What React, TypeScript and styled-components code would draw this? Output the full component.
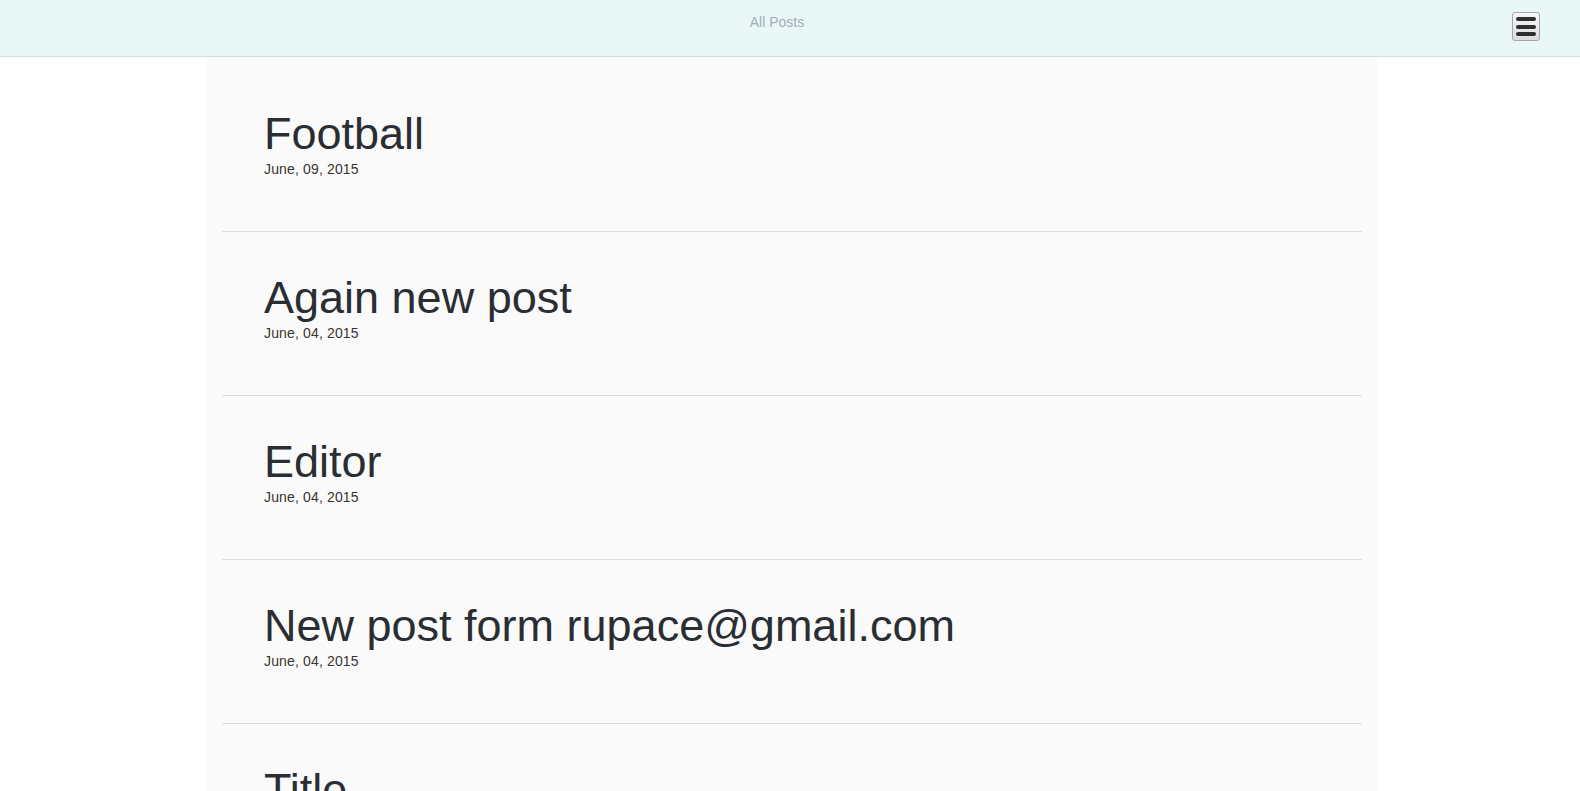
import React from "react";
import styled, { createGlobalStyle } from "styled-components";

const GlobalStyle = createGlobalStyle`
  html, body {
    margin: 0;
    padding: 0;
    background: #ffffff;
    font-family: "Liberation Sans", Arial, Helvetica, sans-serif;
  }
  * { box-sizing: border-box; }
`;

const Page = styled.div`
  display: flex;
  flex-direction: column;
  min-height: 100vh;
`;

const Header = styled.header`
  height: 57px;
  background: #e9f7f7;
  border-bottom: 1px solid #d3dcdc;
  display: flex;
  align-items: flex-start;
  padding: 0 40px 0 42px;
`;

const HeaderTitle = styled.a`
  flex: 1;
  text-align: center;
  font-size: 14px;
  line-height: 20px;
  padding-top: 12px;
  color: #a3adb8;
  text-decoration: none;
`;

const MenuButton = styled.button`
  margin-top: 12px;
  width: 28px;
  height: 29px;
  padding: 0;
  border: 1px solid #a6a6a6;
  border-radius: 3px;
  background: linear-gradient(#f7f7f7, #dcdcdc);
  display: flex;
  flex-direction: column;
  align-items: center;
  justify-content: center;
  gap: 3.5px;
  cursor: pointer;
`;

const Bar = styled.span`
  display: block;
  width: 20px;
  height: 4px;
  border-radius: 2px;
  background: #2f2f2f;
`;

const Container = styled.main`
  flex: 1;
  width: 1170px;
  margin-left: calc(50% - 583px);
  background: #fafafa;
  padding: 11px 15px 0;
`;

const Post = styled.article`
  padding: 41px 0 52px 42px;
  border-bottom: 1px solid #dcdcdc;
`;

const PostTitle = styled.h2`
  margin: 0;
  font-size: 45px;
  line-height: 50px;
  font-weight: 400;
  color: #2a2e33;
`;

const PostDate = styled.div`
  font-size: 14px;
  line-height: 20px;
  letter-spacing: 0.15px;
  color: #3a3530;
`;

const posts = [
  { title: "Football", date: "June, 09, 2015" },
  { title: "Again new post", date: "June, 04, 2015" },
  { title: "Editor", date: "June, 04, 2015" },
  { title: "New post form rupace@gmail.com", date: "June, 04, 2015" },
  { title: "Title", date: "June, 04, 2015" },
];

export default function App() {
  return (
    <>
      <GlobalStyle />
      <Page>
        <Header>
          <HeaderTitle href="#">All Posts</HeaderTitle>
          <MenuButton aria-label="Menu">
            <Bar />
            <Bar />
            <Bar />
          </MenuButton>
        </Header>
        <Container>
          {posts.map((p, i) => (
            <Post key={i}>
              <PostTitle>{p.title}</PostTitle>
              <PostDate>{p.date}</PostDate>
            </Post>
          ))}
        </Container>
      </Page>
    </>
  );
}
